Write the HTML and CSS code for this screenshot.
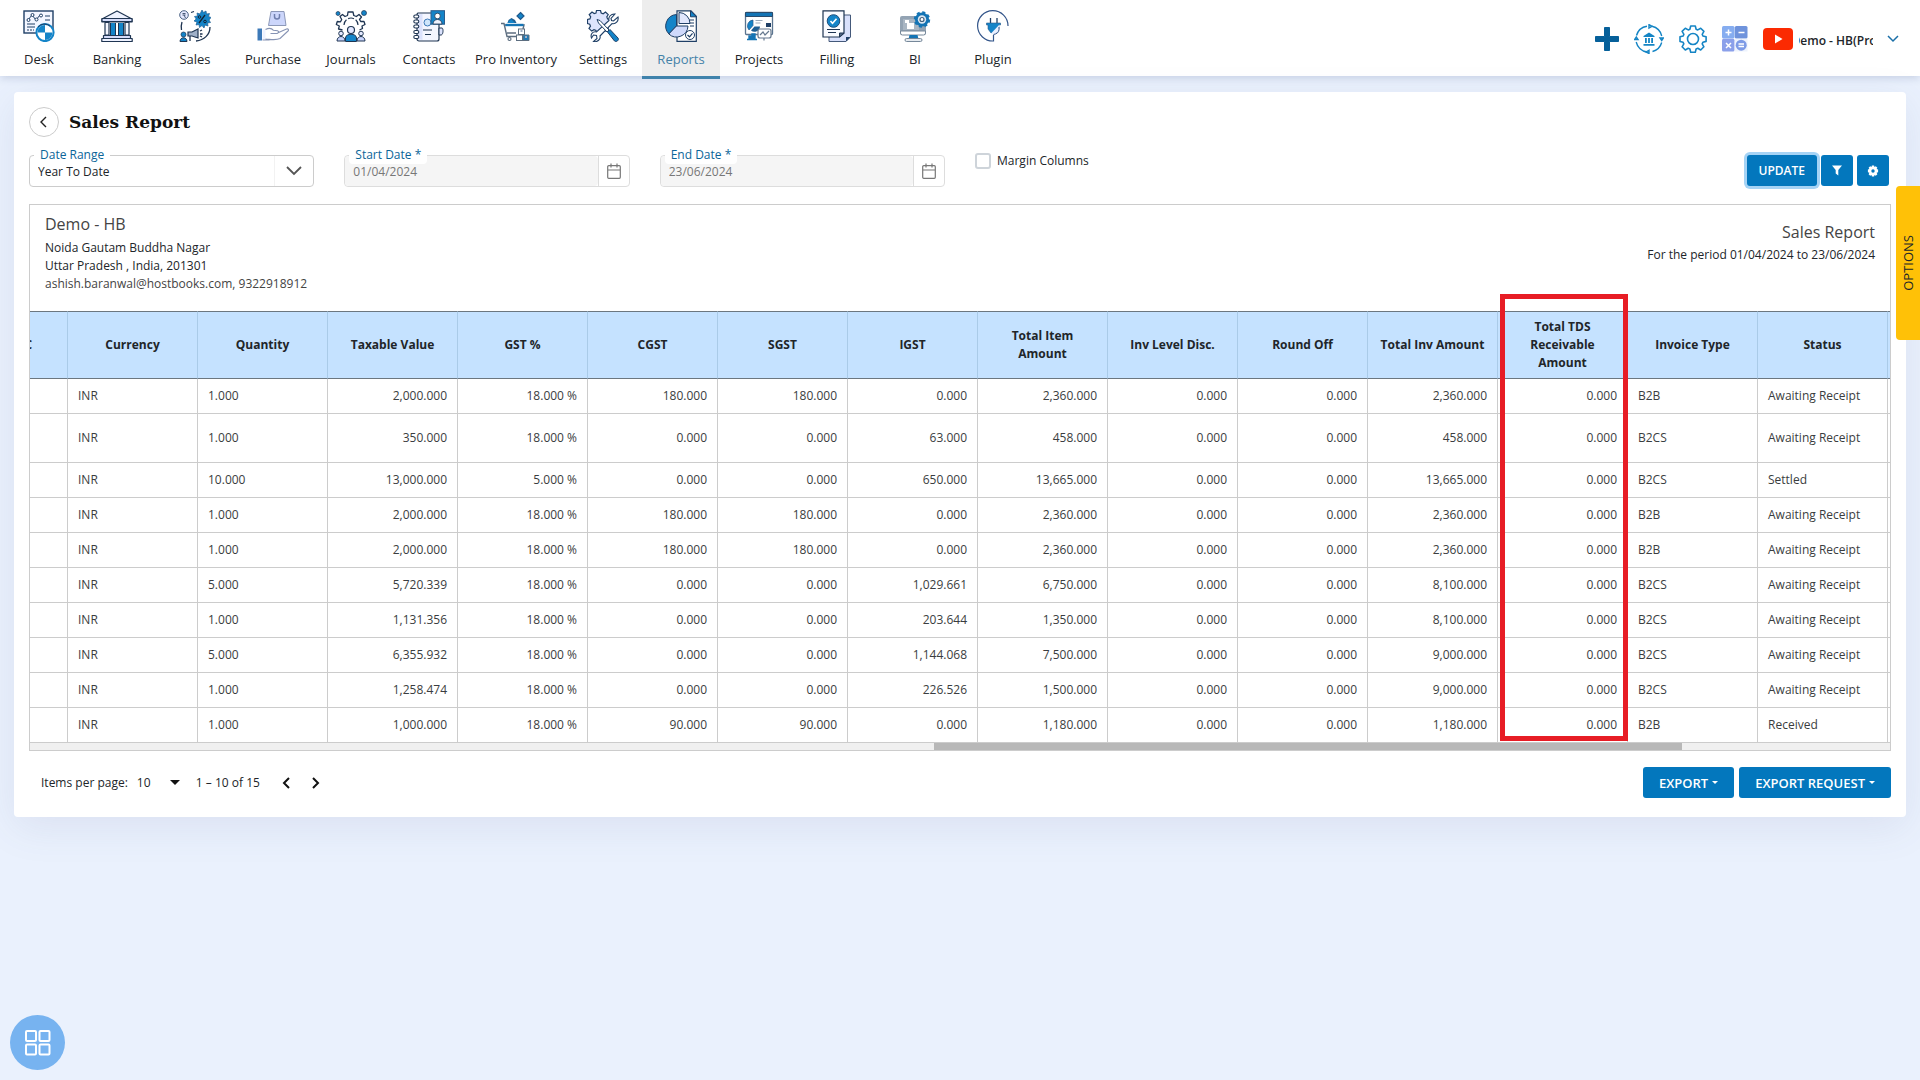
FILE: index.html
```html
<!DOCTYPE html>
<html lang="en">
<head>
<meta charset="utf-8">
<title>Sales Report</title>
<meta name="viewport" content="width=device-width, initial-scale=1">
<link rel="stylesheet" href="styles.css">
</head>
<body>
<header class="topbar">
  <nav class="menu">
    <a class="menu-item" href="#">
      <svg class="menu-icon" viewBox="0 0 32 32"><rect x="1" y="1" width="29" height="22" fill="#f3f6ff" stroke="#1f3f66" stroke-width="1.4"/><path d="M5 10l4-5 4 5 4-5" fill="none" stroke="#1f3f66"/><g fill="#fff" stroke="#1f3f66"><circle cx="5.500" cy="10" r="1.500"/><circle cx="9.500" cy="5" r="1.500"/><circle cx="13.500" cy="9.500" r="1.500"/><circle cx="18" cy="5.500" r="1.500"/></g><path d="M22 6h5M22 10h5M4 14h8M4 17h8M4 20h2M7 20h2M10 20h1" stroke="#1f3f66" stroke-width="1.200"/><circle cx="22" cy="22.500" r="8.600" fill="#fff" stroke="#1484c8" stroke-width="2"/><path d="M22 22.500V15a7.500 7.500 0 0 0-7.500 7.500zM22 22.500V30a7.500 7.500 0 0 0 7.500-7.500z" fill="#1484c8"/><path d="M15 17a8.600 8.600 0 0 1 12-1" fill="none" stroke="#1f3f66"/></svg>
      <span>Desk</span></a>
    <a class="menu-item" href="#">
      <svg class="menu-icon" viewBox="0 0 32 32"><g stroke="#1f3552" stroke-width="1.200" stroke-linejoin="round"><path d="M1 9L16 1l15 8v3H1z" fill="#eef2ff"/><path d="M1 8.500h30v3H1z" fill="#d5dcfa"/><path d="M4 12.500h4V25H4zM24 12.500h4V25h-4z" fill="#f5f7ff"/><path d="M2.500 25.500h27v3h-27z" fill="#d5dcfa"/><path d="M.8 28.500h30.400v3H.8z" fill="#eef2ff"/></g><path d="M10 13h4v12h-4zM18 13h4v12h-4z" fill="#1484c8"/><path d="M14.500 13v12M17.500 13v12M9.500 13v12M22.500 13v12" stroke="#1f3552"/></svg>
      <span>Banking</span></a>
    <a class="menu-item" href="#">
      <svg class="menu-icon" viewBox="0 0 32 32"><circle cx="5" cy="5" r="4.300" fill="#e4e9ff" stroke="#4a6283"/><path d="M3.500 3.500h3M3.500 5h3M5 5l1.500 3" stroke="#1f3552" fill="none" stroke-width=".8"/><path d="M23 0l1.500 2.500L27 1l.5 3 3-.5-1 3 2.500 1-2 2.500 1.500 2.500-3 .5.500 3-3-1-1 3-2-2.500-2.500 2-.5-3-3 .5 1-3-3-1 2.200-2-1.700-2.500 3-.5-.5-3 3 1z" fill="#1484c8" stroke="#1f5f93" stroke-width=".7"/><path d="M20 13l6-8" stroke="#123" stroke-width="1.300"/><circle cx="20.500" cy="7" r="1.300" fill="none" stroke="#123"/><circle cx="26" cy="11.500" r="1.300" fill="none" stroke="#123"/><path d="M12 2.500l3-1M3 12c-1 3-1 5-.5 8M31 17c0 8-6 13-14 14" fill="none" stroke="#1f3552" stroke-width="1.300"/><circle cx="4.500" cy="24.500" r="2.500" fill="#1484c8" stroke="#1f3552" stroke-width=".7"/><path d="M1 31.500c0-5 7-5 7 0z" fill="#1484c8" stroke="#1f3552"/><path d="M9 22h4l6-3v9l-6-2H9z" fill="#9fb0c8" stroke="#1f3552" stroke-width="1.200"/><path d="M11 26v5M21 21l2-1M21 24h2.500M21 26l2 1" stroke="#1f3552" stroke-width="1.300"/></svg>
      <span>Sales</span></a>
    <a class="menu-item" href="#">
      <svg class="menu-icon" viewBox="0 0 32 32"><path d="M14 1.500h13l2 14H11.500z" fill="#ccd6fb" stroke="#8c98b8"/><path d="M17.500 4v2.500a2.500 2.500 0 0 0 5 0V4" fill="none" stroke="#6f7fae" stroke-width="1.500"/><path d="M.5 18.500H5v12H.5z" fill="#3c79b8"/><path d="M5.500 19.500h3v10h-3z" fill="#eef2ff"/><path d="M8.500 19.500c3-1.500 6-1.500 8 .8l4 .5c2 .8 1 2.800-1 2.700h-6M20.500 23l9-4c2-.5 2.500 1 1.500 2l-8 7.500c-4 2-8 1-14.500.5M5.500 30h7" fill="none" stroke="#8794b4" stroke-width="1.100"/></svg>
      <span>Purchase</span></a>
    <a class="menu-item" href="#">
      <svg class="menu-icon" viewBox="0 0 32 32"><circle cx="3" cy="3.500" r="2" fill="#1484c8" stroke="#1f3552" stroke-width=".7"/><circle cx="29" cy="3" r="2.500" fill="#1484c8" stroke="#1f3552" stroke-width=".7"/><path d="M7.500 20l-4-1 .8-3-3-1.500 1-3 3.200.3 1.200-2.300L5 6.500 7.500 4.500l2.500 2 2.500-1L13 2h5l.8 3.500 2.500 1L24 4.500l2.500 2.500-2 2.500 1.200 2 3.300 0 1 3-3 1.500.5 2.500-3 1.500" fill="none" stroke="#1f3552" stroke-width="1.300" stroke-linejoin="round"/><path d="M9 15a7 7 0 0 1 14 0" fill="none" stroke="#1f3552" stroke-width="1.200" stroke-dasharray="6 2"/><circle cx="6" cy="23.500" r="2.300" fill="#e4e9ff" stroke="#1f3552"/><circle cx="26" cy="23.500" r="2.300" fill="#e4e9ff" stroke="#1f3552"/><path d="M2 31c0-6 8-6 8 0zM22 31c0-6 8-6 8 0z" fill="#c9d4fb" stroke="#1f3552"/><circle cx="16" cy="20" r="3.500" fill="#e4e9ff" stroke="#1f3552" stroke-width="1.200"/><path d="M10.500 31.500V28c0-5 11-5 11 0v3.500z" fill="#1484c8" stroke="#1f3552"/></svg>
      <span>Journals</span></a>
    <a class="menu-item" href="#">
      <svg class="menu-icon" viewBox="0 0 32 32"><path d="M5 3h21v26a2 2 0 0 1-2 2H6a2 2 0 0 1-2-2V5a2 2 0 0 1 1-2z" fill="#f4f6ff" stroke="#1f3552" stroke-width="1.200"/><path d="M5.500 4h4v26c-2 0-4-1-4-2z" fill="#dbe2fc"/><g fill="#fff" stroke="#1f3552" stroke-width="1.100"><rect x=".8" y="5" width="5" height="3" rx="1.500"/><rect x=".8" y="10" width="5" height="3" rx="1.500"/><rect x=".8" y="15" width="5" height="3" rx="1.500"/><rect x=".8" y="20.500" width="5" height="3" rx="1.500"/><rect x=".8" y="25.500" width="5" height="3" rx="1.500"/></g><path d="M26 18h3c1.500 0 1.500 7-1 7h-2z" fill="#dbe2fc" stroke="#1f3552"/><circle cx="14.500" cy="12.500" r="3.500" fill="#cfe6fb" stroke="#3c79b8"/><path d="M10 20h9M12 24.500h6" stroke="#1f3552" stroke-width="1.200"/><rect x="18" y=".7" width="13.500" height="13.500" fill="#1484c8" stroke="#2b5c8c"/><circle cx="24.500" cy="6" r="2.800" fill="#fff" stroke="#1f3552" stroke-width=".8"/><path d="M20 14c0-6 9-6 9 0z" fill="#eef2ff" stroke="#1f3552" stroke-width=".8"/></svg>
      <span>Contacts</span></a>
    <a class="menu-item" href="#">
      <svg class="menu-icon" viewBox="0 0 32 32"><path d="M20.500 2.500L24 6l-3.500 3.500L17 6z" fill="#1484c8" stroke="#20598c" stroke-width="1.200"/><path d="M7.500 13l1-3 3-2 3.500 2 1.500 3z" fill="#1f5f93"/><path d="M11 9l4 4H7.500z" fill="#1484c8"/><path d="M1 13.500h3l3 13h12M5 15h19l-1 4M7 23h9" fill="none" stroke="#5d6e80" stroke-width="1.400"/><path d="M5.500 15h18" stroke="#1474b4" stroke-width="2.400"/><circle cx="9.500" cy="29" r="1.500" fill="none" stroke="#5d6e80" stroke-width="1.200"/><rect x="18.500" y="19" width="6" height="5.500" fill="#fff" stroke="#5d6e80"/><rect x="16.500" y="25" width="6" height="5.500" fill="#fff" stroke="#5d6e80"/><path d="M23 25h6v5.500h-6z" fill="#1f78b4" stroke="#5d6e80"/><path d="M20.500 20v2h2v-2M25 26v2h2v-2" fill="#9fb0c8"/></svg>
      <span>Pro Inventory</span></a>
    <a class="menu-item" href="#">
      <svg class="menu-icon" viewBox="0 0 32 32"><path d="M8 3l.5-2.500h4l.7 2.500 2 .8L17.500 2l2.700 2.700-1.400 2.200.8 2 2.400.6v4l-2.500.7-.8 2 1.500 2.300-2.700 2.600-2.300-1.400-2 .8-.7 2.300H8.500L8 20.500l-2-.8-2.300 1.400L1 18.500l1.500-2.300-.8-2L-.5 13.500v-4l2.400-.6.8-2L1.200 4.700 4 2l2.200 1.500z" transform="translate(1 0)" fill="#dde4fd" stroke="#1f3f66" stroke-width="1.200"/><path d="M28 4l-4 4.500.5 2 2 .5 4.500-4c1 4-2.500 7.500-6 6.500L13 26c1 3-2.500 6.500-6.500 5.500l3.500-3-.5-3-3-.5-2 3C3 24 6 21 9.500 22L22 10.500C21 7 24 3.500 28 4z" fill="#fff" stroke="#1f3f66" stroke-width="1.100"/><path d="M10 9.500l3 1 9 9.500-2 2L11.500 13z" fill="#fff" stroke="#1f3f66"/><path d="M20.500 22l2.500-2.500 8 8.500c1.500 2-1.500 4.500-3.500 3z" fill="#1484c8" stroke="#1f3f66"/></svg>
      <span>Settings</span></a>
    <a class="menu-item active" href="#" aria-current="page">
      <svg class="menu-icon" viewBox="0 0 32 32"><path d="M12 .8h14l5.300 5.500v25H12z" fill="#fff" stroke="#1f3f66" stroke-width="1.200"/><path d="M25.500.8v6h6z" fill="#1484c8" stroke="#1f3f66"/><path d="M24 10h5M24 13h5M25 16h4" stroke="#1f3f66" stroke-width="1.200"/><circle cx="25" cy="25" r="4.500" fill="#fff" stroke="#1f3f66"/><path d="M22.500 25l2 1.800 3-3.500" fill="none" stroke="#1f3f66" stroke-width="1.200"/><path d="M11.500 4.500v11L4 24A11.500 11.500 0 0 1 11.500 4.500z" fill="#1484c8" stroke="#1f3f66"/><path d="M11.500 16H23A11.500 11.500 0 0 1 3.800 24z" fill="#cfd9fb" stroke="#1f3f66"/><path d="M14 2.500A11 11 0 0 1 25 13.500H14z" fill="#e1e7fd" stroke="#1f3f66"/></svg>
      <span>Reports</span></a>
    <a class="menu-item" href="#">
      <svg class="menu-icon" viewBox="0 0 32 32"><rect x="2.500" y="2.500" width="27" height="22" rx="1" fill="#fff" stroke="#5b7590" stroke-width="1.300"/><path d="M2.500 2.500h27v4h-27z" fill="#1474b4" stroke="#2b4c6c"/><path d="M10 10v5.500L6 20a6 6 0 0 1 4-10z" fill="#1484c8" stroke="#2b5c8c" stroke-width=".7"/><path d="M11.500 16.500h5.500a5.500 5.500 0 0 1-9 4z" fill="#1f5f93"/><path d="M12.500 10.500h7M12.500 13h5" stroke="#9aa9ba" stroke-width="1.200"/><path d="M23 13h5v4h-5z" fill="#1f3f66"/><path d="M4 29.500h10M6 29v-3h2v3M9 29v-5h3v5" stroke="#1474b4" fill="#1474b4" stroke-width="1.400"/><rect x="15" y="19" width="13" height="9" rx="2" fill="#fff" stroke="#66798f" stroke-width="1.200"/><path d="M17 25l3-3 2 3 4-4M21 28v2.500" fill="none" stroke="#66798f" stroke-width="1.200"/></svg>
      <span>Projects</span></a>
    <a class="menu-item" href="#">
      <svg class="menu-icon" viewBox="0 0 32 32"><path d="M8 5h21.500v22l-4.500 4.500H8z" fill="#d8e0fb" stroke="#44597a"/><path d="M25 31.500V27h4.500z" fill="#1f3f66"/><path d="M2 .8h21v22.500L18.500 27H2z" fill="#fafbff" stroke="#1f3552" stroke-width="1.200"/><path d="M18.500 27v-4H23z" fill="#556a88" stroke="#1f3552"/><circle cx="12.500" cy="11" r="6.300" fill="#1484c8" stroke="#1f4f7c"/><path d="M9.500 11l2 2.200 4-4.500" fill="none" stroke="#fff" stroke-width="1.600"/><path d="M6 19.500h13M7 22.500h8" stroke="#1f3552" stroke-width="1.100"/></svg>
      <span>Filling</span></a>
    <a class="menu-item" href="#">
      <svg class="menu-icon" viewBox="0 0 32 32"><rect x="1" y="6" width="26" height="19" rx="2" fill="#93a3b3"/><path d="M4 9h16v11H4z" fill="#a9b6c3"/><path d="M8 13h7v6H8zM6 10h4v3H6z" fill="#fff"/><path d="M1.500 21h25v2a2 2 0 0 1-2 2h-21a2 2 0 0 1-2-2z" fill="#fff" stroke="#76889a"/><path d="M10.500 25h8l1 4h-10z" fill="#1474b4"/><rect x="6" y="28.500" width="17" height="3" rx="1.500" fill="#e6ebf0" stroke="#76889a"/><circle cx="23" cy="9.500" r="7" fill="#1474b4" stroke="#1474b4" stroke-width="2.400" stroke-dasharray="3 2.500"/><circle cx="23" cy="9.500" r="4.200" fill="#dbe7f2"/><circle cx="23" cy="9.500" r="2" fill="#fff" stroke="#41607d" stroke-width="1.200"/></svg>
      <span>BI</span></a>
    <a class="menu-item" href="#">
      <svg class="menu-icon" viewBox="0 0 32 32"><path d="M31 16A15.200 15.200 0 1 0 16.500 31v-6" fill="none" stroke="#33558a" stroke-width="1.200"/><path d="M13.500 8v5M20 8v5" stroke="#1f3f66" stroke-width="1.300"/><path d="M9.500 13h14v2h-1.500v4l-3 4h-5l-3-4v-4H9.500z" fill="#1484c8" stroke="#2b5c8c" stroke-width=".6"/><path d="M22.500 14.500v5l-4 4.500h-5z" fill="#eaf0ff"/><path d="M22 17v2.500c0 3-2.500 4.500-5.500 5" fill="none" stroke="#33558a"/></svg>
      <span>Plugin</span></a>
  </nav>
  <div class="tools">
    <button class="icon-btn" aria-label="Add"><svg width="24" height="24" viewBox="0 0 24 24"><path d="M9.500.5h5v9h9v5h-9v9h-5v-9h-9v-5h9z" fill="#06609a" stroke="#06609a" stroke-linejoin="round"/></svg></button>
    <button class="icon-btn" aria-label="Bank feeds"><svg width="30" height="30" viewBox="0 0 30 30"><g fill="none" stroke="#1585c5" stroke-width="1.400"><path d="M2.500 11.500A13 13 0 0 1 13 2.200M18 2.300A13 13 0 0 1 27.700 12M27.700 18.500A13 13 0 0 1 18.500 27.500M13 28A13 13 0 0 1 2.200 18"/><path d="M15 .7l3 1.600-3 1.700zM29.300 14l-1.600 2.500L26 14zM15 26.300L12 28l3 1.500zM.7 15.500L2.300 13 4 15.500z" fill="#fff"/></g><path d="M15 8.500l5.500 3.500v1h-11v-1zM11 14h1.800v5H11zM14.100 14h1.800v5h-1.800zM17.200 14H19v5h-1.800zM9.500 20h11v1.800h-11z" fill="#1585c5"/></svg></button>
    <button class="icon-btn" aria-label="Preferences"><svg width="28" height="28" viewBox="0 0 28 28"><path d="M11.700 1h4.600l.8 3.200 1.700.7 2.900-1.700 3.200 3.200-1.700 2.900.7 1.700 3.200.8v4.600l-3.200.8-.7 1.700 1.700 2.900-3.200 3.200-2.900-1.700-1.700.7-.8 3.200h-4.600l-.8-3.200-1.700-.7-2.900 1.700-3.200-3.200 1.700-2.900-.7-1.700L1 16.400v-4.600l3.200-.8.7-1.700-1.800-2.900 3.200-3.200 2.900 1.700 1.700-.7z" fill="none" stroke="#1585c5" stroke-width="1.600" stroke-linejoin="round"/><circle cx="14" cy="14" r="5.500" fill="none" stroke="#1585c5" stroke-width="1.600"/></svg></button>
    <button class="icon-btn" aria-label="Calculator"><svg width="26" height="26" viewBox="0 0 26 26"><rect width="12.500" height="12.500" rx="1.500" fill="#86adf0"/><rect x="12.800" width="12.700" height="12.500" rx="1.500" fill="#6f93dc"/><rect y="12.800" width="12.500" height="12.700" rx="1.500" fill="#8ba0ea"/><rect x="12.800" y="12.800" width="12.700" height="12.700" fill="#eef3fd"/><circle cx="19.200" cy="19.200" r="5.500" fill="#7e9be6"/><path d="M3.500 6.500h6M6.500 3.500v6M16.500 6.500h6M4 17l5 5M9 17l-5 5M16.500 18h5.500M16.500 20.500h5.500" stroke="#fff" stroke-width="1.500"/></svg></button>
    <a class="icon-btn" href="#" aria-label="Video tutorials"><svg width="30" height="22" viewBox="0 0 30 22"><rect width="30" height="22" rx="4" fill="#fb2a02"/><path d="M12 6.500l7.500 4.500-7.500 4.500z" fill="#fff"/></svg></a>
    <button class="account"><span class="account-name">Demo - HB(Pro)</span><svg width="12" height="8" viewBox="0 0 12 8"><path d="M1 1l5 5 5-5" fill="none" stroke="#1a6fa8" stroke-width="1.500"/></svg></button>
  </div>
</header>

<main class="card">
  <div class="title-row">
    <button class="back" aria-label="Back"><svg width="8" height="12" viewBox="0 0 8 12"><path d="M6 1L1 6l5 5" fill="none" stroke="#222" stroke-width="1.400"/></svg></button>
    <h1>Sales Report</h1>
  </div>

  <form class="filters">
    <div class="field">
      <label for="range">Date Range</label>
      <select id="range"><option>Year To Date</option></select>
      <span class="field-end wide"><svg width="16" height="10" viewBox="0 0 16 10"><path d="M1 1l7 7 7-7" fill="none" stroke="#555" stroke-width="1.800"/></svg></span>
    </div>
    <div class="field disabled">
      <label for="start">Start Date *</label>
      <input id="start" type="text" value="01/04/2024" disabled>
      <span class="field-end"><svg width="14" height="16" viewBox="0 0 14 16"><path d="M1.700 2.700h10.600a1 1 0 0 1 1 1v10.600a1 1 0 0 1-1 1H1.700a1 1 0 0 1-1-1V3.700a1 1 0 0 1 1-1zM.7 7h12.600M4 .5v4M10 .5v4" fill="none" stroke="#777" stroke-width="1.200"/></svg></span>
    </div>
    <div class="field disabled">
      <label for="end">End Date *</label>
      <input id="end" type="text" value="23/06/2024" disabled>
      <span class="field-end"><svg width="14" height="16" viewBox="0 0 14 16"><path d="M1.700 2.700h10.600a1 1 0 0 1 1 1v10.600a1 1 0 0 1-1 1H1.700a1 1 0 0 1-1-1V3.700a1 1 0 0 1 1-1zM.7 7h12.600M4 .5v4M10 .5v4" fill="none" stroke="#777" stroke-width="1.200"/></svg></span>
    </div>
    <label class="check"><input type="checkbox"><span>Margin Columns</span></label>
    <div class="actions">
      <button type="button" class="btn update">UPDATE</button>
      <button type="button" class="btn square" aria-label="Filter"><svg width="10" height="11" viewBox="0 0 10 11"><path d="M0 .5h10L6.300 5v5.500L3.700 8.500V5z" fill="#fff"/></svg></button>
      <button type="button" class="btn square" aria-label="Column settings"><svg width="12" height="12" viewBox="0 0 12 12"><path d="M4.900.5h2.200l.4 1.400 1.300-.7 1.600 1.500-.8 1.400 1.500.4v2.800l-1.500.5.8 1.400-1.600 1.600-1.300-.8-.4 1.500H4.900l-.4-1.500-1.300.8-1.600-1.600.8-1.400L.9 7.300V4.500l1.500-.4-.8-1.400 1.600-1.500 1.300.7z" fill="#fff"/><circle cx="6" cy="6" r="1.700" fill="#0377bd"/></svg></button>
    </div>
  </form>

  <section class="report">
    <div class="report-head">
      <div>
        <h2>Demo - HB</h2>
        <p>Noida Gautam Buddha Nagar</p>
        <p>Uttar Pradesh , India, 201301</p>
        <p class="soft">ashish.baranwal@hostbooks.com, 9322918912</p>
      </div>
      <div class="report-period">
        <h2>Sales Report</h2>
        <p>For the period 01/04/2024 to 23/06/2024</p>
      </div>
    </div>
    <div class="table-view">
      <table>
        <thead>
          <tr><th>HSN / SAC</th><th>Currency</th><th>Quantity</th><th>Taxable Value</th><th>GST %</th><th>CGST</th><th>SGST</th><th>IGST</th><th>Total Item Amount</th><th>Inv Level Disc.</th><th>Round Off</th><th>Total Inv Amount</th><th>Total TDS Receivable Amount</th><th>Invoice Type</th><th>Status</th><th></th></tr>
        </thead>
        <tbody>
          <tr><td></td><td>INR</td><td>1.000</td><td class="n">2,000.000</td><td class="n">18.000 %</td><td class="n">180.000</td><td class="n">180.000</td><td class="n">0.000</td><td class="n">2,360.000</td><td class="n">0.000</td><td class="n">0.000</td><td class="n">2,360.000</td><td class="n">0.000</td><td>B2B</td><td>Awaiting Receipt</td><td></td></tr>
          <tr class="tall"><td></td><td>INR</td><td>1.000</td><td class="n">350.000</td><td class="n">18.000 %</td><td class="n">0.000</td><td class="n">0.000</td><td class="n">63.000</td><td class="n">458.000</td><td class="n">0.000</td><td class="n">0.000</td><td class="n">458.000</td><td class="n">0.000</td><td>B2CS</td><td>Awaiting Receipt</td><td></td></tr>
          <tr><td></td><td>INR</td><td>10.000</td><td class="n">13,000.000</td><td class="n">5.000 %</td><td class="n">0.000</td><td class="n">0.000</td><td class="n">650.000</td><td class="n">13,665.000</td><td class="n">0.000</td><td class="n">0.000</td><td class="n">13,665.000</td><td class="n">0.000</td><td>B2CS</td><td>Settled</td><td></td></tr>
          <tr><td></td><td>INR</td><td>1.000</td><td class="n">2,000.000</td><td class="n">18.000 %</td><td class="n">180.000</td><td class="n">180.000</td><td class="n">0.000</td><td class="n">2,360.000</td><td class="n">0.000</td><td class="n">0.000</td><td class="n">2,360.000</td><td class="n">0.000</td><td>B2B</td><td>Awaiting Receipt</td><td></td></tr>
          <tr><td></td><td>INR</td><td>1.000</td><td class="n">2,000.000</td><td class="n">18.000 %</td><td class="n">180.000</td><td class="n">180.000</td><td class="n">0.000</td><td class="n">2,360.000</td><td class="n">0.000</td><td class="n">0.000</td><td class="n">2,360.000</td><td class="n">0.000</td><td>B2B</td><td>Awaiting Receipt</td><td></td></tr>
          <tr><td></td><td>INR</td><td>5.000</td><td class="n">5,720.339</td><td class="n">18.000 %</td><td class="n">0.000</td><td class="n">0.000</td><td class="n">1,029.661</td><td class="n">6,750.000</td><td class="n">0.000</td><td class="n">0.000</td><td class="n">8,100.000</td><td class="n">0.000</td><td>B2CS</td><td>Awaiting Receipt</td><td></td></tr>
          <tr><td></td><td>INR</td><td>1.000</td><td class="n">1,131.356</td><td class="n">18.000 %</td><td class="n">0.000</td><td class="n">0.000</td><td class="n">203.644</td><td class="n">1,350.000</td><td class="n">0.000</td><td class="n">0.000</td><td class="n">8,100.000</td><td class="n">0.000</td><td>B2CS</td><td>Awaiting Receipt</td><td></td></tr>
          <tr><td></td><td>INR</td><td>5.000</td><td class="n">6,355.932</td><td class="n">18.000 %</td><td class="n">0.000</td><td class="n">0.000</td><td class="n">1,144.068</td><td class="n">7,500.000</td><td class="n">0.000</td><td class="n">0.000</td><td class="n">9,000.000</td><td class="n">0.000</td><td>B2CS</td><td>Awaiting Receipt</td><td></td></tr>
          <tr><td></td><td>INR</td><td>1.000</td><td class="n">1,258.474</td><td class="n">18.000 %</td><td class="n">0.000</td><td class="n">0.000</td><td class="n">226.526</td><td class="n">1,500.000</td><td class="n">0.000</td><td class="n">0.000</td><td class="n">9,000.000</td><td class="n">0.000</td><td>B2CS</td><td>Awaiting Receipt</td><td></td></tr>
          <tr><td></td><td>INR</td><td>1.000</td><td class="n">1,000.000</td><td class="n">18.000 %</td><td class="n">90.000</td><td class="n">90.000</td><td class="n">0.000</td><td class="n">1,180.000</td><td class="n">0.000</td><td class="n">0.000</td><td class="n">1,180.000</td><td class="n">0.000</td><td>B2B</td><td>Received</td><td></td></tr>
        </tbody>
      </table>
    </div>
    <div class="scrollbar"><div class="thumb"></div></div>
    <div class="highlight"></div>
  </section>

  <footer class="card-foot">
    <div class="pager">
      <label for="per-page">Items per page:</label>
      <span class="per-page"><select id="per-page"><option>10</option></select><svg width="10" height="5" viewBox="0 0 10 5"><path d="M0 0h10L5 5z" fill="#111"/></svg></span>
      <span>1 – 10 of 15</span>
      <button class="page-btn" aria-label="Previous page"><svg width="8" height="12" viewBox="0 0 8 12"><path d="M7 1L2 6l5 5" fill="none" stroke="#111" stroke-width="2"/></svg></button>
      <button class="page-btn" aria-label="Next page"><svg width="8" height="12" viewBox="0 0 8 12"><path d="M1 1l5 5-5 5" fill="none" stroke="#111" stroke-width="2"/></svg></button>
    </div>
    <div class="exports">
      <button class="btn">EXPORT <svg width="6" height="3" viewBox="0 0 6 3"><path d="M0 0h6L3 3z" fill="#fff"/></svg></button>
      <button class="btn">EXPORT REQUEST <svg width="6" height="3" viewBox="0 0 6 3"><path d="M0 0h6L3 3z" fill="#fff"/></svg></button>
    </div>
  </footer>
</main>

<button class="options">OPTIONS</button>
<button class="fab" aria-label="Apps"><svg width="26" height="26" viewBox="0 0 26 26"><g fill="none" stroke="#fff" stroke-width="2"><rect x="1" y="1" width="10" height="10" rx="1"/><rect x="14.500" y="1" width="10" height="10" rx="1"/><rect x="1" y="14.500" width="10" height="10" rx="1"/><rect x="14.500" y="14.500" width="10" height="10" rx="1"/></g></svg></button>
</body>
</html>
```
FILE: styles.css
```css
* { box-sizing: border-box; }

body {
  margin: 0;
  min-height: 100vh;
  background: #eaf1fd;
  color: #212529;
  font: 12px/18px "Open Sans", "Noto Sans", sans-serif;
}

button, input, select { font: inherit; color: inherit; }
button { padding: 0; border: 0; background: none; cursor: pointer; }
svg { display: block; flex: none; }
h1, h2, p { margin: 0; }

/* top bar */
.topbar {
  display: flex;
  justify-content: space-between;
  height: 76px;
  background: #fff;
  box-shadow: 0 2px 8px rgba(60, 80, 130, .2);
}
.menu { display: flex; }
.menu-item {
  display: flex;
  flex-direction: column;
  align-items: center;
  gap: 8px;
  min-width: 78px;
  height: 79px;
  padding: 10px 7px 0;
  color: #212529;
  font-size: 13px;
  font-weight: 500;
  text-decoration: none;
  white-space: nowrap;
}
.menu-icon { width: 32px; height: 32px; }
.menu-item.active {
  background: #ededed;
  border-bottom: 3px solid #3f82ab;
  color: #4482a8;
}
.tools { display: flex; align-items: center; gap: 15px; padding: 1px 21px 0 0; }
.icon-btn { display: flex; }
.account { display: flex; align-items: center; gap: 14px; margin-left: -9px; }
.account-name {
  display: flex;
  justify-content: center;
  width: 74px;
  padding-top: 4px;
  overflow: hidden;
  font-weight: 600;
  white-space: nowrap;
}

/* card */
.card {
  margin: 16px 14px 0;
  padding: 15px 15px 19px;
  background: #fff;
  border-radius: 4px;
  box-shadow: 0 10px 40px rgba(80, 90, 140, .1);
}
.title-row { display: flex; align-items: center; gap: 10px; }
.back {
  display: flex;
  align-items: center;
  justify-content: center;
  width: 30px;
  height: 30px;
  border: 1px solid #ccc;
  border-radius: 50%;
}
h1 { font: bold 17px/30px "DejaVu Serif", serif; color: #111; }

/* filters */
.filters {
  display: grid;
  grid-template-columns: repeat(6, 1fr);
  gap: 30px;
  padding-top: 18px;
}
.field {
  position: relative;
  display: flex;
  height: 32px;
  border: 1px solid #ccc;
  border-radius: 4px;
}
.field label {
  position: absolute;
  top: -10px;
  left: 4px;
  padding: 0 6px;
  background: #fff;
  color: #0b6599;
  line-height: 18px;
  border-radius: 4px;
}
.field select, .field input {
  flex: 1;
  min-width: 0;
  padding: 2px 8px 0;
  border: 0;
  border-radius: 4px;
  outline: 0;
  background: transparent;
  appearance: none;
}
.field.disabled { border-color: #ddd; }
.field.disabled input { background: #f5f5f5; color: #777; }
.field-end {
  display: flex;
  align-items: center;
  justify-content: center;
  width: 31px;
  border-left: 1px solid #ddd;
}
.field-end.wide { width: 39px; border-color: #f2f2f2; pointer-events: none; }
.check { display: flex; align-items: center; gap: 6px; height: 18px; margin-top: -3px; }
.check input {
  width: 16px;
  height: 16px;
  margin: 0;
  border: 2px solid #ced4da;
  border-radius: 3px;
  background: #fff;
  appearance: none;
}
.actions {
  grid-column: 5 / 7;
  display: flex;
  justify-content: flex-end;
  gap: 4px;
  padding-right: 2px;
}
.btn {
  display: flex;
  align-items: center;
  gap: 4px;
  height: 31px;
  padding: 0 16px;
  border-radius: 3px;
  background: #0377bd;
  color: #fff;
  font-weight: 600;
}
.btn.update { padding: 0 12px; box-shadow: 0 0 0 3px #a5d3f5; }
.btn.square { justify-content: center; width: 32px; padding: 0; }

/* report */
.report { position: relative; margin-top: 17px; border: 1px solid #ccc; }
.report-head {
  display: flex;
  justify-content: space-between;
  height: 106px;
  padding: 7px 15px 0;
}
.report-head h2 { margin-bottom: 3px; color: #444; font-size: 16px; font-weight: 400; line-height: 24px; }
.report-head .soft { color: #444; }
.report-period { padding-top: 8px; text-align: right; }

.report-period h2 { margin-bottom: 2px; }

.table-view { overflow: hidden; }
table {
  width: 2080px;
  margin-left: -92px;
  table-layout: fixed;
  border-collapse: separate;
  border-spacing: 0;
}
th {
  height: 68px;
  padding: 6px 10px;
  border-right: 1px solid #aacbe8;
  border-top: 1px solid #6c7780;
  border-bottom: 1px solid #6c7780;
  background: #c5e2ff;
  font-weight: 700;
}
td {
  height: 35px;
  padding: 0 10px;
  border-right: 1px solid #ccc;
  border-bottom: 1px solid #ccc;
  color: #3a3d40;
}
.tall td { height: 49px; }
.n { text-align: right; }

.scrollbar { height: 7px; background: #f0f0f0; }
.thumb { width: 40.2%; height: 100%; margin-left: 48.6%; background: #b8b8b8; }
.highlight {
  position: absolute;
  top: 89px;
  left: 1470px;
  width: 128px;
  height: 447px;
  border: 5px solid #e71d25;
}

/* footer */
.card-foot { display: flex; justify-content: space-between; align-items: center; padding-top: 16px; }
.pager { display: flex; align-items: center; padding-left: 12px; }
.per-page { display: flex; align-items: center; margin: 0 16px 0 9px; }
.per-page select { width: 33px; padding: 0; border: 0; background: transparent; appearance: none; }
.page-btn { display: flex; padding: 4px 0; margin-left: 22px; }
.exports { display: flex; gap: 5px; }
.exports .btn { font-size: 13px; }

/* floating controls */
.options {
  position: fixed;
  top: 186px;
  right: 0;
  width: 24px;
  height: 154px;
  border-radius: 4px 0 0 4px;
  background: #ffc107;
  font-size: 13px;
  writing-mode: sideways-lr;
}
.fab {
  position: fixed;
  left: 10px;
  bottom: 10px;
  display: flex;
  align-items: center;
  justify-content: center;
  width: 55px;
  height: 55px;
  border-radius: 50%;
  background: #77b3f0;
}
```
